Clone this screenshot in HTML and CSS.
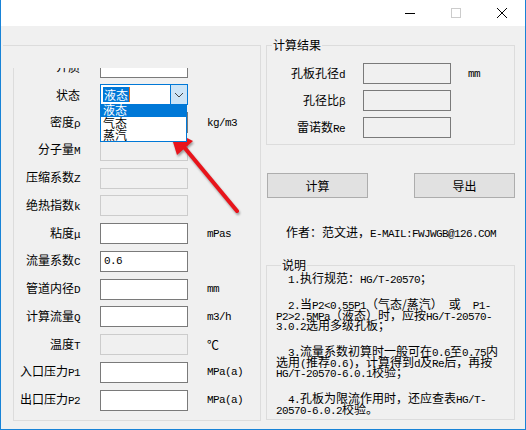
FILE: index.html
```html
<!DOCTYPE html>
<html lang="zh">
<head>
<meta charset="utf-8">
<title>孔板计算</title>
<link rel="stylesheet" href="styles.css">
</head>
<body>
<div class="window">
  <div class="titlebar">
    <div class="cap"><svg width="10" height="10" viewBox="0 0 10 10"><path d="M0 5.5H10" stroke="#000" stroke-width="1"/></svg></div>
    <div class="cap"><svg width="10" height="10" viewBox="0 0 10 10"><rect x="0.5" y="0.5" width="9" height="9" fill="none" stroke="#cccccc" stroke-width="1"/></svg></div>
    <div class="cap"><svg width="10" height="10" viewBox="0 0 10 10"><path d="M0 0L10 10M10 0L0 10" stroke="#000" stroke-width="1"/></svg></div>
  </div>
  <div class="client">
    <div class="lframe">
      <div class="lscroll">
        <div class="rows">
          <div class="row"><span class="lbl">介质</span><div class="box"></div></div>
          <div class="row"><span class="lbl">状态</span>
            <div class="combo"><span class="ctext"><span class="sel">液态</span><span class="caret"></span></span><span class="cbtn"><svg width="10" height="6" viewBox="0 0 10 6"><path d="M1 1L5 5L9 1" fill="none" stroke="#444" stroke-width="1"/></svg></span></div>
            <ul class="dropdown">
              <li class="hi">液态</li>
              <li>气态</li>
              <li>蒸汽</li>
            </ul>
          </div>
          <div class="row"><span class="lbl">密度<span class="m">ρ</span></span><div class="box"></div><span class="unit m">kg/m3</span></div>
          <div class="row"><span class="lbl">分子量<span class="m">M</span></span><div class="box dis"></div></div>
          <div class="row"><span class="lbl">压缩系数<span class="m">Z</span></span><div class="box dis"></div></div>
          <div class="row"><span class="lbl">绝热指数<span class="m">k</span></span><div class="box dis"></div></div>
          <div class="row"><span class="lbl">粘度<span class="m">μ</span></span><div class="box"></div><span class="unit m">mPas</span></div>
          <div class="row"><span class="lbl">流量系数<span class="m">C</span></span><div class="box"><span class="m">0.6</span></div></div>
          <div class="row"><span class="lbl">管道内径<span class="m">D</span></span><div class="box"></div><span class="unit m">mm</span></div>
          <div class="row"><span class="lbl">计算流量<span class="m">Q</span></span><div class="box"></div><span class="unit m">m3/h</span></div>
          <div class="row"><span class="lbl">温度<span class="m">T</span></span><div class="box dis"></div><span class="unit">℃</span></div>
          <div class="row"><span class="lbl">入口压力<span class="m">P1</span></span><div class="box"></div><span class="unit m">MPa(a)</span></div>
          <div class="row"><span class="lbl">出口压力<span class="m">P2</span></span><div class="box"></div><span class="unit m">MPa(a)</span></div>
        </div>
      </div>
    </div>
    <div class="rcol">
      <fieldset class="group results">
        <legend>计算结果</legend>
        <div class="rrow"><span class="rlbl">孔板孔径<span class="m">d</span></span><div class="box ro"></div><span class="unit m">mm</span></div>
        <div class="rrow"><span class="rlbl">孔径比<span class="m">β</span></span><div class="box ro"></div></div>
        <div class="rrow"><span class="rlbl">雷诺数<span class="m">Re</span></span><div class="box ro"></div></div>
      </fieldset>
      <div class="buttons">
        <div class="btn">计算</div>
        <div class="btn">导出</div>
      </div>
      <div class="author">作者：范文进，<span class="m">E-MAIL:FWJWGB@126.COM</span></div>
      <fieldset class="group notes">
        <legend>说明</legend>
        <div class="para">
          <div class="ln"><span class="m">  1.</span>执行规范：<span class="m">HG/T-20570</span>；</div>
        </div>
        <div class="para">
          <div class="ln"><span class="m">  2.</span>当<span class="m">P2&lt;0.55P1</span>（气态/蒸汽）<span class="m"> </span>或<span class="m">  P1-</span></div>
          <div class="ln"><span class="m">P2&gt;2.5MPa</span>（液态）时，应按<span class="m">HG/T-20570-</span></div>
          <div class="ln"><span class="m">3.0.2</span>选用多级孔板；</div>
        </div>
        <div class="para">
          <div class="ln"><span class="m">  3.</span>流量系数初算时一般可在<span class="m">0.6</span>至<span class="m">0.75</span>内</div>
          <div class="ln">选用<span class="m">(</span>推荐<span class="m">0.6)</span>，计算得到<span class="m">d</span>及<span class="m">Re</span>后，再按</div>
          <div class="ln"><span class="m">HG/T-20570-6.0.1</span>校验；</div>
        </div>
        <div class="para">
          <div class="ln"><span class="m">  4.</span>孔板为限流作用时，还应查表<span class="m">HG/T-</span></div>
          <div class="ln"><span class="m">20570-6.0.2</span>校验。</div>
        </div>
      </fieldset>
    </div>
  </div>
  <svg class="arrow" width="526" height="430" viewBox="0 0 526 430">
    <line x1="184" y1="147" x2="237" y2="211" stroke="#e8141b" stroke-width="4" stroke-linecap="round"/>
    <polygon points="169,129 193,141 177,155" fill="#e8141b"/>
  </svg>
</div>
</body>
</html>
```

FILE: styles.css
```css
* { box-sizing: border-box; }
html, body { margin: 0; padding: 0; background: #ffffff; }
body {
  font-family: "Noto Sans CJK SC", "Noto Sans", sans-serif;
  font-size: 12px;
  color: #000;
}
.m {
  font-family: "Liberation Mono", "Noto Sans CJK SC", monospace;
  font-size: 11px;
  letter-spacing: -0.6px;
}
.window {
  position: relative;
  width: 526px;
  height: 430px;
  border-left: 1px solid #1883d7;
  border-right: 1px solid #1883d7;
  border-bottom: 1px solid #1883d7;
  display: flex;
  flex-direction: column;
  background: #f0f0f0;
}
.titlebar {
  height: 26px;
  background: #ffffff;
  display: flex;
  justify-content: flex-end;
}
.cap {
  width: 46px;
  height: 26px;
  display: flex;
  align-items: center;
  justify-content: center;
}
.client {
  flex: 1;
  display: flex;
  background: #f0f0f0;
}
.lframe {
  margin-left: 2px;
  margin-top: 19px;
  width: 258px;
  height: 376px;
  border-top: 1px solid #dcdcdc;
  border-right: 1px solid #dcdcdc;
}
.lscroll {
  margin-left: 10px;
  margin-top: 22px;
  height: 353px;
  border-left: 1px solid #dcdcdc;
  border-bottom: 1px solid #dcdcdc;
  overflow: hidden;
}
.rows {
  margin-top: -11.5px;
  display: flex;
  flex-direction: column;
  gap: 6.75px;
}
.row {
  position: relative;
  display: grid;
  grid-template-columns: 66px 88px auto;
  column-gap: 20px;
  align-items: center;
  height: 21px;
}
.lbl {
  text-align: right;
  white-space: nowrap;
  line-height: 14px;
}
.unit { margin-left: -1px; white-space: nowrap; line-height: 14px; }
.box {
  height: 21px;
  width: 88px;
  border: 1px solid #7a7a7a;
  background: #ffffff;
  padding-left: 3px;
  display: flex;
  align-items: center;
}
.box.dis { border-color: #cccccc; background: #f0f0f0; }
.box.ro { background: #f0f0f0; }
.combo {
  height: 21px;
  width: 88px;
  border: 1px solid #0078d7;
  background: #ffffff;
  display: flex;
}
.ctext {
  flex: 1;
  display: flex;
  align-items: center;
  padding-left: 2px;
}
.sel {
  background: #0078d7;
  color: #ffffff;
  line-height: 15px;
  padding: 0 1px;
}
.caret {
  width: 1px;
  height: 15px;
  background: #e06c1a;
}
.cbtn {
  width: 17px;
  background: #cce4f7;
  border-left: 1px solid #0078d7;
  display: flex;
  align-items: center;
  justify-content: center;
}
.dropdown {
  position: absolute;
  left: 86px;
  top: 20px;
  width: 87px;
  height: 38px;
  margin: 0;
  padding: 0;
  list-style: none;
  background: #ffffff;
  border: 1px solid #0078d7;
  border-top: none;
  z-index: 2;
}
.dropdown li {
  height: 12.3px;
  line-height: 12.3px;
  padding-left: 2px;
}
.dropdown li.hi { background: #0078d7; color: #ffffff; }
.rcol {
  margin-left: 5px;
  width: 249px;
  margin-top: 11px;
  display: flex;
  flex-direction: column;
}
.group {
  margin: 0;
  padding: 0;
  border: 1px solid #dcdcdc;
  min-width: 0;
}
.group legend {
  margin-left: 5px;
  padding: 0 1px;
  line-height: 16px;
}
.results {
  padding: 10px 0 6px 0;
  display: flex;
  flex-direction: column;
  gap: 6px;
}
.rrow {
  display: grid;
  grid-template-columns: 78px 88px auto;
  column-gap: 18px;
  align-items: center;
  height: 21px;
}
.rrow .unit { margin-left: -1px; }
.rlbl { text-align: right; white-space: nowrap; line-height: 14px; }
.buttons {
  margin-top: 28px;
  display: flex;
  justify-content: space-between;
  padding-left: 1px;
}
.btn {
  width: 101px;
  height: 25px;
  background: #e1e1e1;
  border: 1px solid #adadad;
  display: flex;
  align-items: center;
  justify-content: center;
}
.author {
  margin-top: 25px;
  padding-left: 20px;
  line-height: 17px;
  white-space: nowrap;
}
.notes {
  margin-top: 14px;
  height: 163px;
  padding: 0 0 0 9px;
}
.para { margin-top: 15.5px; }
.para:first-of-type { margin-top: 0; }
.ln {
  height: 10.5px;
  line-height: 10.5px;
  white-space: pre;
}
.arrow {
  position: absolute;
  left: -1px;
  top: 0;
  pointer-events: none;
  filter: drop-shadow(1px 2px 1px rgba(0,0,0,0.35));
}
```
